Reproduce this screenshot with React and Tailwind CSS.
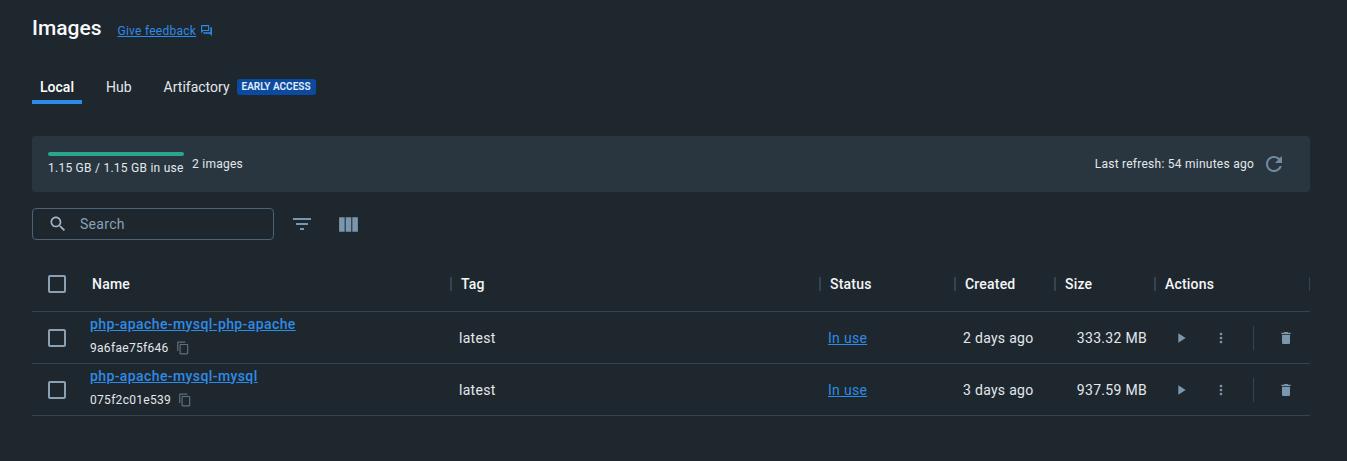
const ICONS = {
  forum: "M15 4v7H5.17L4 12.17V4h11m1-2H3c-.55 0-1 .45-1 1v14l4-4h10c.55 0 1-.45 1-1V3c0-.55-.45-1-1-1zm5 4h-2v9H6v2c0 .55.45 1 1 1h11l4 4V7c0-.55-.45-1-1-1z",
  search: "M15.5 14h-.79l-.28-.27C15.41 12.59 16 11.11 16 9.5 16 5.91 13.09 3 9.5 3S3 5.91 3 9.5 5.91 16 9.5 16c1.61 0 3.09-.59 4.23-1.57l.27.28v.79l5 4.99L20.49 19l-4.99-5zm-6 0C7.01 14 5 11.99 5 9.5S7.01 5 9.5 5 14 7.01 14 9.5 11.99 14 9.5 14z",
  filter: "M10 18h4v-2h-4v2zM3 6v2h18V6H3zm3 7h12v-2H6v2z",
  columns: "M14.67 5v14H9.33V5h5.34zm1 14H21V5h-5.33v14zm-7.34 0V5H3v14h5.33z",
  refresh: "M17.65 6.35C16.2 4.9 14.21 4 12 4c-4.42 0-7.99 3.58-7.99 8s3.57 8 7.99 8c3.73 0 6.84-2.55 7.73-6h-2.08c-.82 2.33-3.04 4-5.65 4-3.31 0-6-2.69-6-6s2.69-6 6-6c1.66 0 3.14.69 4.22 1.78L13 11h7V4l-2.35 2.35z",
  play: "M8 5v14l11-7z",
  more: "M12 8c1.1 0 2-.9 2-2s-.9-2-2-2-2 .9-2 2 .9 2 2 2zm0 2c-1.1 0-2 .9-2 2s.9 2 2 2 2-.9 2-2-.9-2-2-2zm0 6c-1.1 0-2 .9-2 2s.9 2 2 2 2-.9 2-2-.9-2-2-2z",
  trash: "M6 19c0 1.1.9 2 2 2h8c1.1 0 2-.9 2-2V7H6v12zM19 4h-3.5l-1-1h-5l-1 1H5v2h14V4z",
  copy: "M16 1H4c-1.1 0-2 .9-2 2v14h2V3h12V1zm3 4H8c-1.1 0-2 .9-2 2v14c0 1.1.9 2 2 2h11c1.1 0 2-.9 2-2V7c0-1.1-.9-2-2-2zm0 16H8V7h11v14z",
  checkbox: "M19 5v14H5V5h14m0-2H5c-1.1 0-2 .9-2 2v14c0 1.1.9 2 2 2h14c1.1 0 2-.9 2-2V5c0-1.1-.9-2-2-2z",
};

function Icon({ name, className }) {
  return (
    <svg viewBox="0 0 24 24" fill="currentColor" className={className}>
      <path d={ICONS[name]} />
    </svg>
  );
}

const COLS = "grid grid-cols-[50px_369px_369px_135px_100px_100px_155px]";

const IMAGES = [
  { name: "php-apache-mysql-php-apache", id: "9a6fae75f646", created: "2 days ago", size: "333.32 MB" },
  { name: "php-apache-mysql-mysql", id: "075f2c01e539", created: "3 days ago", size: "937.59 MB" },
];

function HeadCell({ children }) {
  return (
    <div className="flex items-center h-[14px]">
      <span className="-ml-px w-0.5 h-[14px] bg-[#33434f]" />
      <span className="ml-[9px] text-sm font-medium tracking-[0.2px] text-[#f4f6f8]">{children}</span>
    </div>
  );
}

function ImageRow({ image }) {
  return (
    <div className={`${COLS} h-[52px] items-center border-b border-[#33434f] text-sm tracking-[0.3px] text-[#e3e8ec]`}>
      <Icon name="checkbox" className="w-6 h-6 ml-[13px] text-[#8ba1b3]" />
      <div className="pl-2 pb-[5px]">
        <a className="block text-sm leading-[18px] font-medium tracking-[0.4px] text-[#2e8be6] underline">{image.name}</a>
        <div className="flex items-center mt-[7px] text-xs leading-[16px] tracking-[0.3px]">
          {image.id}
          <Icon name="copy" className="w-3.5 h-3.5 ml-[7px] text-[#5c7080]" />
        </div>
      </div>
      <div className="pl-2">latest</div>
      <div className="pl-2">
        <a className="text-[#2e8be6] underline">In use</a>
      </div>
      <div className="pl-2">{image.created}</div>
      <div className="text-right pr-2">{image.size}</div>
      <div className="flex items-center h-full">
        <Icon name="play" className="w-4 h-4 ml-[18px] text-[#7b97ad]" />
        <Icon name="more" className="w-4 h-4 ml-6 text-[#7b97ad]" />
        <span className="w-px h-6 ml-6 bg-[#33434f]" />
        <Icon name="trash" className="w-4 h-4 ml-6 text-[#7b97ad]" />
      </div>
    </div>
  );
}

export default function App() {
  return (
    <div className="min-h-[461px] bg-[#1e272e] pl-8 pr-[37px] pt-[17px] font-['Roboto',sans-serif] text-white">
      <div className="flex items-center h-[22px]">
        <h1 className="text-[21px] leading-[22px] font-medium text-[#f8f9fa]">Images</h1>
        <a className="ml-4 mt-[5px] text-xs tracking-[0.25px] text-[#2e8be6] underline">Give feedback</a>
        <Icon name="forum" className="w-[13px] h-[13px] ml-1 mt-[5px] text-[#2e8be6]" />
      </div>

      <div className="flex items-center mt-[31px] h-[34px] text-sm text-[#e3e8ec]">
        <div className="relative w-[50px] h-[34px] flex items-center justify-center font-medium text-white">
          Local
          <span className="absolute left-0 right-0 bottom-0 h-1 bg-[#2e8be6]" />
        </div>
        <span className="ml-6">Hub</span>
        <span className="ml-8">Artifactory</span>
        <span className="ml-[7px] w-[79px] h-4 flex items-center justify-center rounded-[3px] bg-[#0b4a9e] text-[10px] font-semibold text-[#e3eefb]">
          EARLY ACCESS
        </span>
      </div>

      <div className="flex items-center justify-between mt-8 h-14 rounded bg-[#29363f] pl-4 pr-6">
        <div className="flex mt-[2px] text-xs tracking-[0.25px] text-[#e3e8ec]">
          <div className="w-[136px]">
            <div className="h-1 rounded-sm bg-[#2aa58f]" />
            <div className="mt-[2px] leading-[20px] whitespace-nowrap">1.15 GB / 1.15 GB in use</div>
          </div>
          <span className="ml-2 leading-[16px] mt-1">2 images</span>
        </div>
        <div className="flex items-center text-xs tracking-[0.25px] text-[#e3e8ec]">
          Last refresh: 54 minutes ago
          <Icon name="refresh" className="w-6 h-6 ml-2 text-[#6e8ba3]" />
        </div>
      </div>

      <div className="flex items-center mt-4 h-8">
        <div className="flex items-center w-[242px] h-8 rounded border border-[#4d6274] pl-[15px]">
          <Icon name="search" className="w-5 h-5 text-[#a3b5c4]" />
          <span className="ml-3 text-sm tracking-[0.3px] text-[#8ba1b3]">Search</span>
        </div>
        <Icon name="filter" className="w-6 h-6 ml-4 text-[#7b97ad]" />
        <Icon name="columns" className="w-[25px] h-[25px] ml-[22px] text-[#7b97ad]" />
      </div>

      <div className={`${COLS} mt-4 h-14 items-center border-b border-[#33434f]`}>
        <Icon name="checkbox" className="w-6 h-6 ml-[13px] text-[#8ba1b3]" />
        <span className="pl-[10px] text-sm font-medium tracking-[0.2px] text-[#f4f6f8]">Name</span>
        <HeadCell>Tag</HeadCell>
        <HeadCell>Status</HeadCell>
        <HeadCell>Created</HeadCell>
        <HeadCell>Size</HeadCell>
        <div className="flex items-center justify-between">
          <HeadCell>Actions</HeadCell>
          <span className="w-px h-[14px] bg-[#33434f]" />
        </div>
      </div>

      {IMAGES.map((image) => (
        <ImageRow key={image.id} image={image} />
      ))}
    </div>
  );
}
